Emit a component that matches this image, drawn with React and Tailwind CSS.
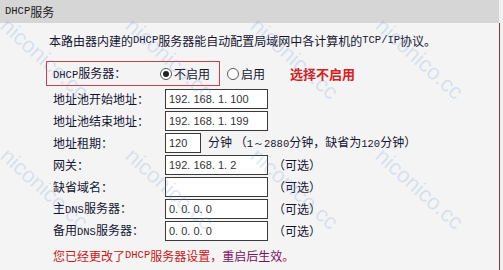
import React from "react";

const font = { fontFamily: '"Noto Sans CJK SC", "Liberation Sans", sans-serif' };

function L({ children }) {
  return (
    <span className="text-[10.5px]" style={{ fontFamily: '"Liberation Mono", monospace' }}>
      {children}
    </span>
  );
}

function Input({ value, w = "w-[103px]" }) {
  return (
    <div
      className={`${w} h-[20px] bg-white border border-[#3a3a3a] flex items-center pl-[3px] text-[11px] text-[#333] leading-none`}
      style={{ fontFamily: '"Liberation Sans", sans-serif' }}
    >
      {value}
    </div>
  );
}

function Row({ label, children }) {
  return (
    <div className="h-[22px] flex items-center">
      <div className="w-[119px] pl-[7px] text-[12px] text-[#141432] leading-none">{label}</div>
      {children}
    </div>
  );
}

function Optional() {
  return <span className="ml-[5px] text-[12px] text-[#141432]">（可选）</span>;
}

function Radio({ checked }) {
  return (
    <div className="w-[12px] h-[12px] rounded-full border border-[#5a5a5a] bg-white flex items-center justify-center">
      {checked && <div className="w-[6px] h-[6px] rounded-full bg-[#222]" />}
    </div>
  );
}

const marks = [
  [15, 10], [140, 10], [265, 10], [390, 10],
  [15, 140], [140, 140], [265, 140], [390, 140],
];

export default function App() {
  return (
    <div className="relative w-[503px] h-[270px] overflow-hidden bg-[#f1f1f1] flex" style={font}>
      <div className="w-[499px] flex flex-col bg-[#f4f4f4]">
        <div className="h-[23px] bg-[#d6d6d6] flex items-center pl-[5px] text-[12px] text-[#1a1a1a]">
          <L>DHCP</L>服务
        </div>
        <div className="pl-[46px] pt-[9px] flex flex-col">
          <div className="ml-[3px] h-[18px] flex items-center text-[12px] text-[#141432] whitespace-pre">
            本路由器内建的<L>DHCP</L>服务器能自动配置局域网中各计算机的<L>TCP/IP</L>协议。
          </div>
          <div className="mt-[11px] flex items-center">
            <div className="w-[174px] h-[25px] border border-[#c8404c] flex items-center">
              <div className="w-[113px] pl-[6px] text-[12px] text-[#141432] leading-none"><L>DHCP</L>服务器：</div>
              <Radio checked />
              <span className="ml-[2px] text-[12px] text-[#141432]">不启用</span>
            </div>
            <div className="ml-[7px]"><Radio /></div>
            <span className="ml-[2px] text-[12px] text-[#141432]">启用</span>
            <span className="ml-[25px] text-[13px] font-bold text-[#d42020]">选择不启用</span>
          </div>
          <div className="mt-[2px] flex flex-col">
            <Row label="地址池开始地址："><Input value="192. 168. 1. 100" /></Row>
            <Row label="地址池结束地址："><Input value="192. 168. 1. 199" /></Row>
            <Row label="地址租期：">
              <Input value="120" w="w-[36px]" />
              <span className="ml-[7px] text-[12px] text-[#141432] whitespace-pre">
                分钟 （<L>1～2880</L>分钟，缺省为<L>120</L>分钟）
              </span>
            </Row>
            <Row label="网关："><Input value="192. 168. 1. 2" /><Optional /></Row>
            <Row label="缺省域名："><Input value="" /><Optional /></Row>
            <Row label={<>主<L>DNS</L>服务器：</>}><Input value="0. 0. 0. 0" /><Optional /></Row>
            <Row label={<>备用<L>DNS</L>服务器：</>}><Input value="0. 0. 0. 0" /><Optional /></Row>
          </div>
          <div className="mt-[5px] pl-[7px] h-[17px] flex items-center text-[12px] text-[#c81818] whitespace-pre">
            您已经更改了<L>DHCP</L>服务器设置，<span className="text-[#7a1060]">重启后生效</span>。
          </div>
        </div>
      </div>
      <div className="w-[1px] mt-[23px] bg-[#8a3a3a]" />
      <div className="flex-1 bg-[#f0f0f0]" />
      {marks.map(([x, y], i) => (
        <div
          key={i}
          className="absolute pointer-events-none text-[22px] text-[rgba(110,150,215,0.22)] origin-top-left rotate-[42deg] whitespace-nowrap"
          style={{ left: x, top: y, fontFamily: '"Liberation Sans", sans-serif' }}
        >
          niconico.cc
        </div>
      ))}
    </div>
  );
}
